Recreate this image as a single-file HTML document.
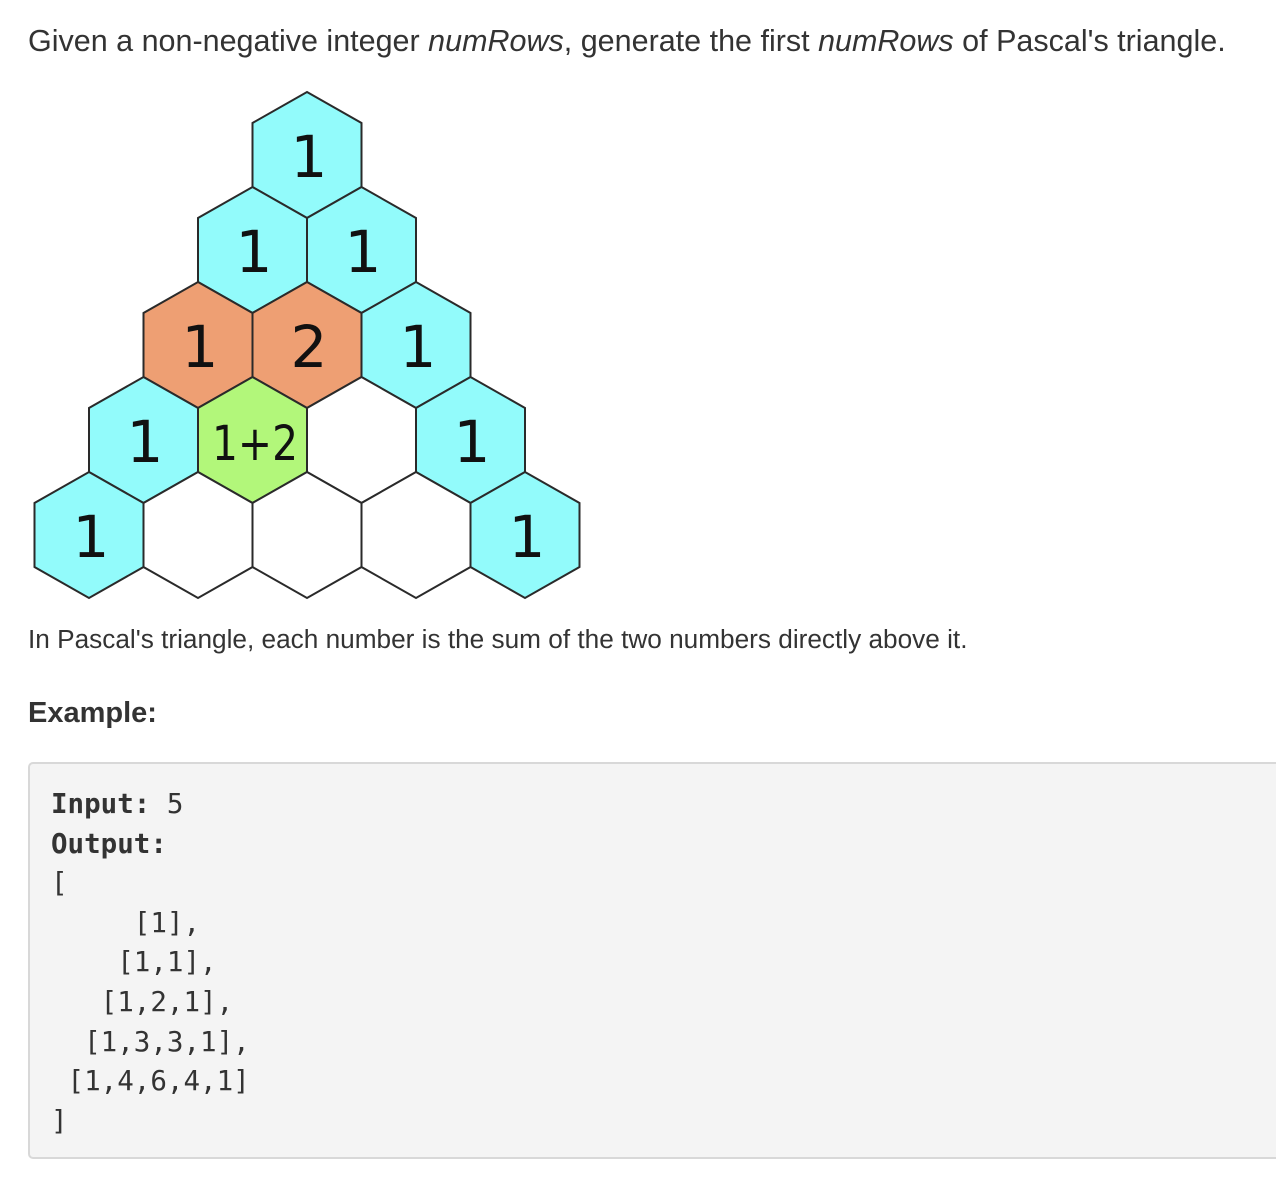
<!DOCTYPE html>
<html><head><meta charset="utf-8"><style>
body{margin:0;background:#fff;width:1276px;height:1204px;overflow:hidden;font-family:"Liberation Sans",Arial,sans-serif;color:#333;}
p{margin:0;position:absolute;left:28px;white-space:nowrap;}
.p1{top:24px;font-size:30.5px;}
.p2{top:624px;font-size:26.2px;}
.p3{top:697px;font-size:29px;font-weight:bold;}
pre{position:absolute;left:28px;top:762px;width:1260px;height:397px;margin:0;box-sizing:border-box;background:#f4f4f4;border:2px solid #d8d8d8;border-radius:5px;padding:21px 0 0 21px;font-family:"DejaVu Sans Mono","Liberation Mono",monospace;font-size:27.5px;line-height:39.6px;color:#333;}
svg{position:absolute;left:0;top:0;}
</style></head><body>
<p class="p1">Given a non-negative integer <i>numRows</i>, generate the first <i>numRows</i> of Pascal's triangle.</p>
<svg width="640" height="620" viewBox="0 0 640 620">
<defs><polygon id="h" points="0,-63 54.5,-32 54.5,32 0,63 -54.5,32 -54.5,-32"/></defs>
<g stroke="#2a2a2a" stroke-width="2">
<use href="#h" x="307" y="155" fill="#92fbfb"/>
<use href="#h" x="252.5" y="250" fill="#92fbfb"/>
<use href="#h" x="361.5" y="250" fill="#92fbfb"/>
<use href="#h" x="198" y="345" fill="#ee9f73"/>
<use href="#h" x="307" y="345" fill="#ee9f73"/>
<use href="#h" x="416" y="345" fill="#92fbfb"/>
<use href="#h" x="143.5" y="440" fill="#92fbfb"/>
<use href="#h" x="252.5" y="440" fill="#b2f77a"/>
<use href="#h" x="361.5" y="440" fill="#fff"/>
<use href="#h" x="470.5" y="440" fill="#92fbfb"/>
<use href="#h" x="89" y="535" fill="#92fbfb"/>
<use href="#h" x="198" y="535" fill="#fff"/>
<use href="#h" x="307" y="535" fill="#fff"/>
<use href="#h" x="416" y="535" fill="#fff"/>
<use href="#h" x="525" y="535" fill="#92fbfb"/>
</g>
<g font-family="DejaVu Sans,sans-serif" font-size="58" text-anchor="middle" fill="#111">
<text x="309" y="177">1</text>
<text x="254" y="272">1</text><text x="363" y="272">1</text>
<text x="200" y="367">1</text><text x="309" y="367">2</text><text x="418" y="367">1</text>
<text x="145" y="462">1</text><text x="472" y="462">1</text>
<text x="91" y="557">1</text><text x="527" y="557">1</text>
<text x="255" y="460" font-size="48" textLength="86" lengthAdjust="spacingAndGlyphs">1+2</text>
</g>
</svg>
<p class="p2">In Pascal's triangle, each number is the sum of the two numbers directly above it.</p>
<p class="p3">Example:</p>
<pre><b>Input:</b> 5
<b>Output:</b>
[
     [1],
    [1,1],
   [1,2,1],
  [1,3,3,1],
 [1,4,6,4,1]
]</pre>
</body></html>
